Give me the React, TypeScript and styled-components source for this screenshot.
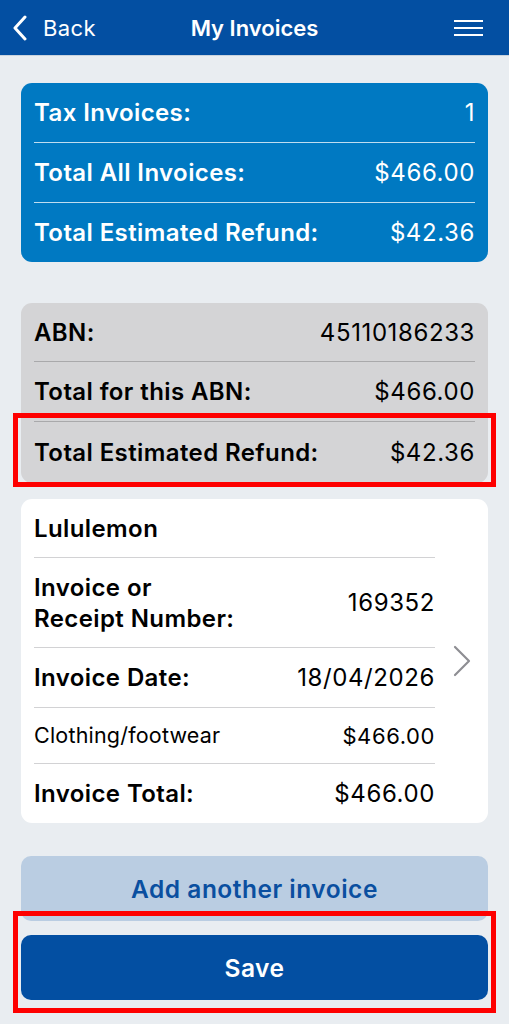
import React from 'react'
import styled, { createGlobalStyle } from 'styled-components'

const GlobalStyle = createGlobalStyle`
  * { box-sizing: border-box; }
  body {
    margin: 0;
    background: #e9edf1;
    font-family: Inter, "Noto Sans", sans-serif;
  }
`

const Page = styled.div`
  position: relative;
  width: 509px;
  min-height: 1024px;
  background: #e9edf1;
`

const Header = styled.div`
  height: 56px;
  background: #034fa2;
  display: grid;
  grid-template-columns: 1fr auto 1fr;
  align-items: center;
  color: #fff;
  border-bottom: 1px solid #c9d3de;
`

const BackLink = styled.div`
  display: flex;
  align-items: center;
  gap: 15px;
  padding-left: 12px;
  font-size: 22px;
  font-weight: 400;
  letter-spacing: 0.4px;
`

const Title = styled.div`
  font-size: 22px;
  font-weight: 600;
`

const Menu = styled.div`
  justify-self: end;
  padding-right: 26px;
  display: flex;
`

const Content = styled.div`
  padding: 27px 21px 0;
  display: flex;
  flex-direction: column;
`

const Card = styled.div<{ $bg: string; $color: string; $gap: number }>`
  background: ${p => p.$bg};
  color: ${p => p.$color};
  border-radius: 11px;
  margin-bottom: ${p => p.$gap}px;
  display: flex;
  align-items: center;
`

const Rows = styled.div<{ $inset: number }>`
  flex: 1;
  display: flex;
  flex-direction: column;
  padding: 0 ${p => p.$inset}px 0 13px;
`

const Row = styled.div<{ $h: number; $line: string }>`
  min-height: ${p => p.$h}px;
  display: flex;
  align-items: center;
  justify-content: space-between;
  border-bottom: 1px solid ${p => p.$line};
  &:last-child { border-bottom: none; }
`

const Label = styled.div<{ $light?: boolean }>`
  font-size: ${p => (p.$light ? 21.5 : 24)}px;
  font-weight: ${p => (p.$light ? 400 : 560)};
  letter-spacing: ${p => (p.$light ? 0.2 : 0.4)}px;
  line-height: 31px;
`

const Value = styled.div<{ $small?: boolean }>`
  font-size: ${p => (p.$small ? 22 : 24)}px;
  font-weight: 400;
  letter-spacing: 0.6px;
  text-align: right;
`

const Chevron = styled.div`
  width: 53px;
  display: flex;
  justify-content: center;
`

const Button = styled.div<{ $bg: string; $color: string; $gap: number }>`
  height: 65px;
  border-radius: 10px;
  background: ${p => p.$bg};
  color: ${p => p.$color};
  display: flex;
  align-items: center;
  justify-content: center;
  font-size: 24.5px;
  font-weight: 560;
  letter-spacing: 0.5px;
  margin-top: ${p => p.$gap}px;
`

const Highlight = styled.div<{ $top: number; $h: number }>`
  position: absolute;
  left: 13px;
  width: 483px;
  top: ${p => p.$top}px;
  height: ${p => p.$h}px;
  border: 5px solid #fe0000;
`

const blueLine = 'rgba(255,255,255,0.75)'
const greyLine = '#a9a9ab'
const whiteLine = '#d2d2d4'

export default function App() {
  return (
    <Page>
      <GlobalStyle />
      <Header>
        <BackLink>
          <svg width="16" height="26" viewBox="0 0 16 26">
            <path d="M13 2 L3 13 L13 24" fill="none" stroke="#fff" strokeWidth="3" strokeLinecap="round" strokeLinejoin="round" />
          </svg>
          Back
        </BackLink>
        <Title>My Invoices</Title>
        <Menu>
          <svg width="29" height="18" viewBox="0 0 29 18">
            <path d="M0 2h29M0 9h29M0 16h29" stroke="#fff" strokeWidth="2" />
          </svg>
        </Menu>
      </Header>
      <Content>
        <Card $bg="#0079c2" $color="#fff" $gap={41}>
          <Rows $inset={13}>
            <Row $h={60} $line={blueLine}><Label>Tax Invoices:</Label><Value>1</Value></Row>
            <Row $h={60} $line={blueLine}><Label>Total All Invoices:</Label><Value>$466.00</Value></Row>
            <Row $h={59} $line={blueLine}><Label>Total Estimated Refund:</Label><Value>$42.36</Value></Row>
          </Rows>
        </Card>
        <Card $bg="#d4d4d6" $color="#000" $gap={16}>
          <Rows $inset={13}>
            <Row $h={59} $line={greyLine}><Label>ABN:</Label><Value>45110186233</Value></Row>
            <Row $h={60} $line={greyLine}><Label>Total for this ABN:</Label><Value>$466.00</Value></Row>
            <Row $h={61} $line={greyLine}><Label>Total Estimated Refund:</Label><Value>$42.36</Value></Row>
          </Rows>
        </Card>
        <Card $bg="#fff" $color="#000" $gap={0}>
          <Rows $inset={0}>
            <Row $h={59} $line={whiteLine}><Label>Lululemon</Label></Row>
            <Row $h={90} $line={whiteLine}><Label>Invoice or<br />Receipt Number:</Label><Value>169352</Value></Row>
            <Row $h={60} $line={whiteLine}><Label>Invoice Date:</Label><Value>18/04/2026</Value></Row>
            <Row $h={56} $line={whiteLine}><Label $light>Clothing/footwear</Label><Value $small>$466.00</Value></Row>
            <Row $h={59} $line={whiteLine}><Label>Invoice Total:</Label><Value>$466.00</Value></Row>
          </Rows>
          <Chevron>
            <svg width="18" height="32" viewBox="0 0 18 32">
              <path d="M2 2 L16 16 L2 30" fill="none" stroke="#8e8e93" strokeWidth="2.2" strokeLinecap="round" strokeLinejoin="round" />
            </svg>
          </Chevron>
        </Card>
        <Button $bg="#bacde2" $color="#0a4fa0" $gap={33}>Add another invoice</Button>
        <Button $bg="#034fa2" $color="#fff" $gap={14}>Save</Button>
      </Content>
      <Highlight $top={413} $h={74} />
      <Highlight $top={911} $h={102} />
    </Page>
  )
}
